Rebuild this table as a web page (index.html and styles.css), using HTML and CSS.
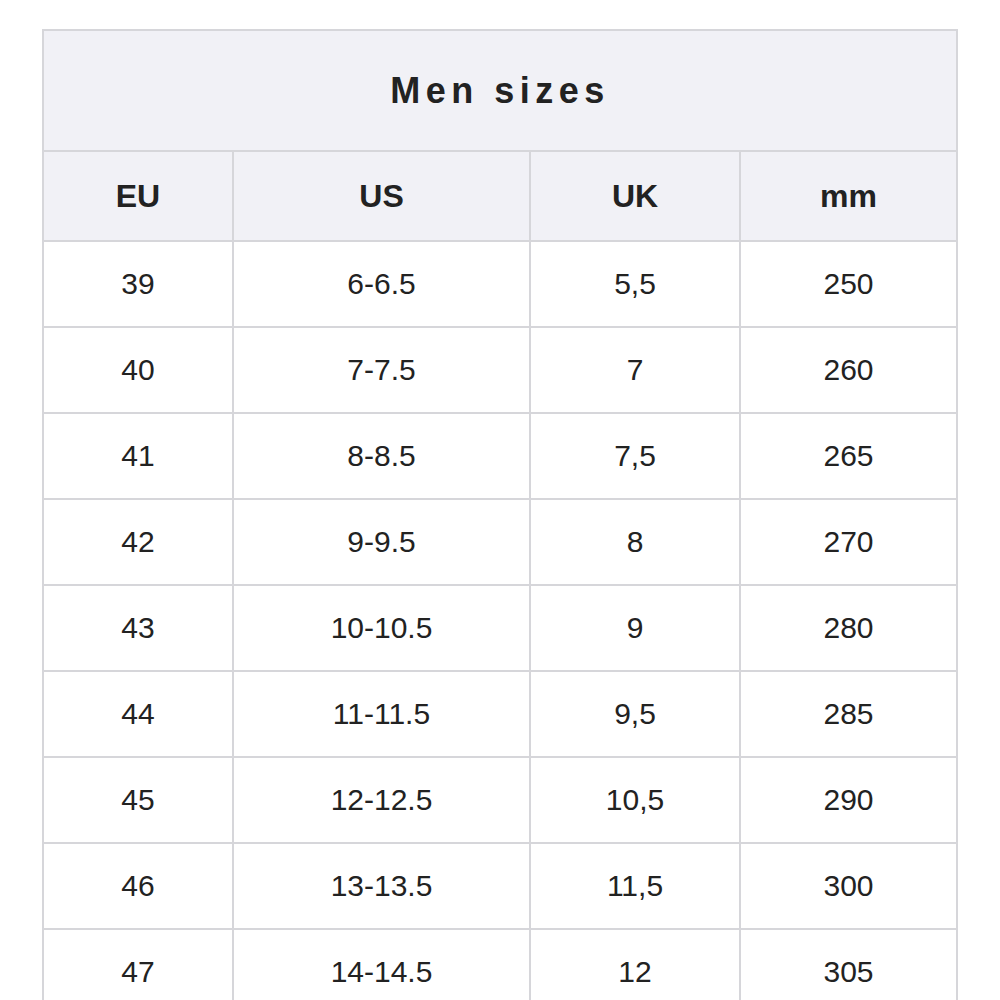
FILE: index.html
```html
<!DOCTYPE html>
<html>
<head>
<meta charset="utf-8">
<link rel="stylesheet" href="styles.css">
</head>
<body>
<div class="page">
<table class="sizes">
  <colgroup>
    <col class="c1"><col class="c2"><col class="c3"><col class="c4">
  </colgroup>
  <thead>
    <tr class="title-row"><th colspan="4" class="title">Men sizes</th></tr>
    <tr class="head-row"><th>EU</th><th>US</th><th>UK</th><th>mm</th></tr>
  </thead>
  <tbody>
    <tr><td>39</td><td>6-6.5</td><td>5,5</td><td>250</td></tr>
    <tr><td>40</td><td>7-7.5</td><td>7</td><td>260</td></tr>
    <tr><td>41</td><td>8-8.5</td><td>7,5</td><td>265</td></tr>
    <tr><td>42</td><td>9-9.5</td><td>8</td><td>270</td></tr>
    <tr><td>43</td><td>10-10.5</td><td>9</td><td>280</td></tr>
    <tr><td>44</td><td>11-11.5</td><td>9,5</td><td>285</td></tr>
    <tr><td>45</td><td>12-12.5</td><td>10,5</td><td>290</td></tr>
    <tr><td>46</td><td>13-13.5</td><td>11,5</td><td>300</td></tr>
    <tr><td>47</td><td>14-14.5</td><td>12</td><td>305</td></tr>
  </tbody>
</table>
</div>
</body>
</html>
```
FILE: styles.css
```css
html, body {
  margin: 0;
  padding: 0;
  background: #ffffff;
}
.page {
  padding: 29px 0 0 42px;
  font-family: "Liberation Sans", Arial, Helvetica, sans-serif;
  color: #222222;
}
.sizes {
  border-collapse: collapse;
  table-layout: fixed;
  width: 916px;
}
.c1 { width: 190px; }
.c2 { width: 297px; }
.c3 { width: 210px; }
.c4 { width: 217px; }
.sizes th,
.sizes td {
  border: 2px solid #d6d6da;
  text-align: center;
  vertical-align: middle;
  padding: 0;
}
.sizes th {
  background: #f1f1f6;
  font-weight: bold;
}
.title-row th {
  height: 119px;
  font-size: 36px;
  letter-spacing: 5.5px;
}
.head-row th {
  height: 88px;
  font-size: 32px;
}
.sizes td {
  height: 84px;
  font-size: 30px;
}
```
